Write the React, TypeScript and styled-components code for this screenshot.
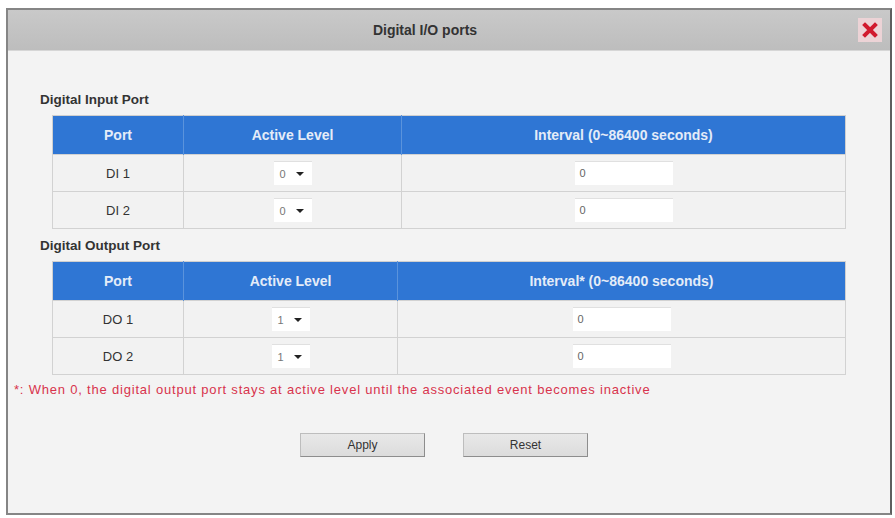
import React from 'react'
import styled, { createGlobalStyle } from 'styled-components'

const GlobalStyle = createGlobalStyle`
  body {
    margin: 0;
    background: #ffffff;
    font-family: "Liberation Sans", Arial, sans-serif;
  }
`

const Dialog = styled.div`
  box-sizing: border-box;
  width: 886px;
  height: 507px;
  margin: 8px 0 0 6px;
  border: 2px solid #858585;
  border-right-color: #5e5e5e;
  background: #f3f3f3;
  display: flex;
  flex-direction: column;
`

const TitleBar = styled.div`
  height: 40px;
  display: grid;
  grid-template-columns: 1fr auto 1fr;
  align-items: center;
  background: linear-gradient(#c9c9c9, #bdbdbd);
  border-bottom: 1px solid #d6d6d6;
`

const Title = styled.div`
  grid-column: 2;
  margin-right: 48px;
  font-size: 14px;
  font-weight: bold;
  color: #333;
`

const Close = styled.button`
  grid-column: 3;
  justify-self: end;
  margin-right: 8px;
  width: 24px;
  height: 24px;
  padding: 0;
  border: none;
  background: #ecd3d6;
  display: flex;
  align-items: center;
  justify-content: center;
`

const Body = styled.div`
  padding-top: 41px;
  display: flex;
  flex-direction: column;
`

const Section = styled.div`
  padding-left: 32px;
  margin-bottom: 9px;
`

const SectionTitle = styled.div`
  font-size: 13.5px;
  font-weight: bold;
  line-height: 16px;
  color: #333;
  margin-bottom: 7px;
`

const Table = styled.table`
  margin-left: 12px;
  width: 790px;
  border-collapse: collapse;
  table-layout: fixed;
  border: 1px solid #cfcfcf;
`

const Th = styled.th<{ $w: number }>`
  width: ${p => p.$w}px;
  height: 38px;
  padding: 0;
  background: #2f76d4;
  color: #e4ecf8;
  font-size: 14px;
  font-weight: bold;
  border-left: 1px solid #5a93dc;
  &:first-child {
    border-left: none;
  }
`

const Td = styled.td`
  height: 36px;
  padding: 0;
  text-align: center;
  font-size: 13px;
  color: #333;
  background: #f2f2f2;
  border: 1px solid #d2d2d2;
`

const Select = styled.div`
  display: inline-flex;
  align-items: center;
  gap: 10px;
  box-sizing: border-box;
  width: 38px;
  height: 24px;
  padding-left: 6px;
  background: #fff;
  border-top: 1px solid #e0e0e0;
  font-size: 11px;
  color: #777;
  vertical-align: middle;
`

const Arrow = styled.span`
  width: 0;
  height: 0;
  border-left: 4px solid transparent;
  border-right: 4px solid transparent;
  border-top: 4px solid #222;
`

const Input = styled.div`
  display: inline-block;
  box-sizing: border-box;
  width: 98px;
  height: 24px;
  padding-left: 5px;
  line-height: 23px;
  text-align: left;
  background: #fff;
  border-top: 1px solid #e0e0e0;
  font-size: 11px;
  color: #666;
  vertical-align: middle;
`

const Note = styled.div`
  margin-top: -2px;
  padding-left: 6px;
  font-size: 13px;
  letter-spacing: 0.8px;
  line-height: 16px;
  color: #d8334d;
`

const Buttons = styled.div`
  display: flex;
  justify-content: center;
  gap: 38px;
  margin-top: 35px;
  padding-right: 10px;
`

const Button = styled.button`
  width: 125px;
  height: 24px;
  border: 1px solid #8d8d8d;
  border-top-color: #bdbdbd;
  border-left-color: #bdbdbd;
  background: linear-gradient(#e8e8e8, #dcdcdc);
  font-family: "Liberation Sans", Arial, sans-serif;
  font-size: 12px;
  color: #333;
  padding: 0;
`

type Row = { port: string; level: string; interval: string }

const PortTable = (props: { cols: number[]; interval: string; rows: Row[] }) => {
  const { cols, interval, rows } = props
  return (
    <Table>
      <thead>
        <tr>
          <Th $w={cols[0]}>Port</Th>
          <Th $w={cols[1]}>Active Level</Th>
          <Th $w={cols[2]}>{interval}</Th>
        </tr>
      </thead>
      <tbody>
        {rows.map(r => (
          <tr key={r.port}>
            <Td>{r.port}</Td>
            <Td>
              <Select>{r.level}<Arrow /></Select>
            </Td>
            <Td>
              <Input>{r.interval}</Input>
            </Td>
          </tr>
        ))}
      </tbody>
    </Table>
  )
}

const App = () => {
  return (
    <>
      <GlobalStyle />
      <Dialog>
        <TitleBar>
          <Title>Digital I/O ports</Title>
          <Close>
            <svg width="16" height="16" viewBox="0 0 16 16">
              <path d="M3 3 L13 13 M13 3 L3 13" stroke="#d11a2e" strokeWidth="4" strokeLinecap="square" />
            </svg>
          </Close>
        </TitleBar>
        <Body>
          <Section>
            <SectionTitle>Digital Input Port</SectionTitle>
            <PortTable
              cols={[130, 217, 443]}
              interval="Interval (0~86400 seconds)"
              rows={[
                { port: 'DI 1', level: '0', interval: '0' },
                { port: 'DI 2', level: '0', interval: '0' },
              ]}
            />
          </Section>
          <Section>
            <SectionTitle>Digital Output Port</SectionTitle>
            <PortTable
              cols={[130, 213, 447]}
              interval="Interval* (0~86400 seconds)"
              rows={[
                { port: 'DO 1', level: '1', interval: '0' },
                { port: 'DO 2', level: '1', interval: '0' },
              ]}
            />
          </Section>
          <Note>*: When 0, the digital output port stays at active level until the associated event becomes inactive</Note>
          <Buttons>
            <Button>Apply</Button>
            <Button>Reset</Button>
          </Buttons>
        </Body>
      </Dialog>
    </>
  )
}

export default App
